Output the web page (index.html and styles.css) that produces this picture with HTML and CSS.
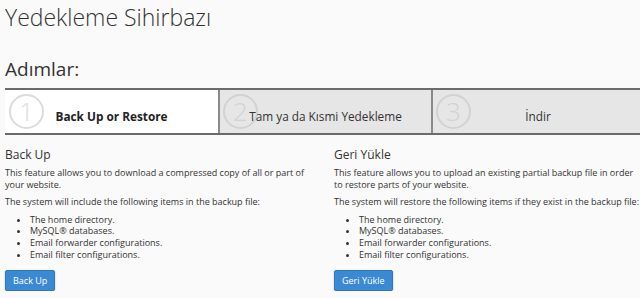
FILE: index.html
```html
<!DOCTYPE html>
<html lang="tr">
<head>
  <meta charset="UTF-8">
  <meta name="viewport" content="width=device-width, initial-scale=1.0">
  <title>Yedekleme Sihirbazı</title>
  <link rel="stylesheet" href="styles.css">
</head>
<body>
  <div class="page">
    <h1 class="page-title">Yedekleme Sihirbazı</h1>
    <h2 class="steps-title">Adımlar:</h2>

    <div class="steps">
      <div class="step active">
        <span class="step-num">1</span>
        <span class="step-label">Back Up or Restore</span>
      </div>
      <div class="step">
        <span class="step-num">2</span>
        <span class="step-label">Tam ya da Kısmi Yedekleme</span>
      </div>
      <div class="step">
        <span class="step-num">3</span>
        <span class="step-label">İndir</span>
      </div>
    </div>

    <div class="options">
      <div class="option">
        <h3>Back Up</h3>
        <p>This feature allows you to download a compressed copy of all or part of your website.</p>
        <p>The system will include the following items in the backup file:</p>
        <ul>
          <li>The home directory.</li>
          <li>MySQL® databases.</li>
          <li>Email forwarder configurations.</li>
          <li>Email filter configurations.</li>
        </ul>
        <a href="#" class="btn">Back Up</a>
      </div>
      <div class="option">
        <h3>Geri Yükle</h3>
        <p>This feature allows you to upload an existing partial backup file in order to restore parts of your website.</p>
        <p>The system will restore the following items if they exist in the backup file:</p>
        <ul>
          <li>The home directory.</li>
          <li>MySQL® databases.</li>
          <li>Email forwarder configurations.</li>
          <li>Email filter configurations.</li>
        </ul>
        <a href="#" class="btn">Geri Yükle</a>
      </div>
    </div>
  </div>
</body>
</html>
```

FILE: styles.css
```css
html, body {
  overflow: hidden;
}
body {
  font-family: 'Open Sans', sans-serif;
  margin: 0;
  background-color: #fafafa;
  color: #333;
}
.page {
  width: 638px;
  padding-left: 5px;
}
.page-title {
  font-size: 23px;
  font-weight: 300;
  line-height: 32px;
  padding-top: 1px;
  margin: 0;
  color: #333;
}
.steps-title {
  font-size: 19px;
  font-weight: 400;
  line-height: 26px;
  margin: 23px 0 6px;
  color: #333;
}
.steps {
  display: grid;
  grid-template-columns: 213px 213px 212px;
  border-top: 2px solid #6b6b6b;
  border-bottom: 2px solid #6b6b6b;
}
.step {
  display: grid;
  align-items: center;
  min-height: 43px;
  background-color: #e6e6e6;
  border-left: 2px solid #8a8a8a;
}
.step.active {
  background-color: #fff;
  border-left: none;
}
.step-num,
.step-label {
  grid-area: 1 / 1;
}
.step-num {
  justify-self: start;
  width: 31px;
  height: 31px;
  margin-left: 3px;
  border: 2px solid #d2d2d2;
  border-radius: 50%;
  color: #d2d2d2;
  font-size: 26px;
  font-weight: 300;
  line-height: 31px;
  text-align: center;
}
.step.active .step-num {
  margin-left: 4px;
  border-color: #dcdcdc;
  color: #dcdcdc;
}
.step-label {
  justify-self: center;
  padding-top: 8px;
  font-size: 11.8px;
  line-height: 16px;
  color: #333;
}
.step.active .step-label {
  font-weight: 700;
  color: #222;
}
.options {
  display: grid;
  grid-template-columns: 329px 1fr;
  padding-top: 12px;
}
.option:first-child {
  padding-right: 12px;
}
.option h3 {
  font-size: 12px;
  font-weight: 400;
  line-height: 16px;
  margin: 0 0 4px;
  color: #333;
}
.option p {
  font-size: 9px;
  line-height: 11.5px;
  margin: 0 0 6px;
  white-space: normal;
}
.option ul {
  font-size: 9px;
  line-height: 11.7px;
  margin: 0 0 7px;
  padding-left: 25px;
}
.btn {
  display: inline-block;
  padding: 3px 7px;
  font-size: 9px;
  line-height: 13px;
  color: #fff;
  text-decoration: none;
  background-color: #3a89d2;
  border: 1px solid #2f78bc;
  border-radius: 2px;
  box-shadow: 0 1px 2px rgba(0, 0, 0, 0.25);
}
```
